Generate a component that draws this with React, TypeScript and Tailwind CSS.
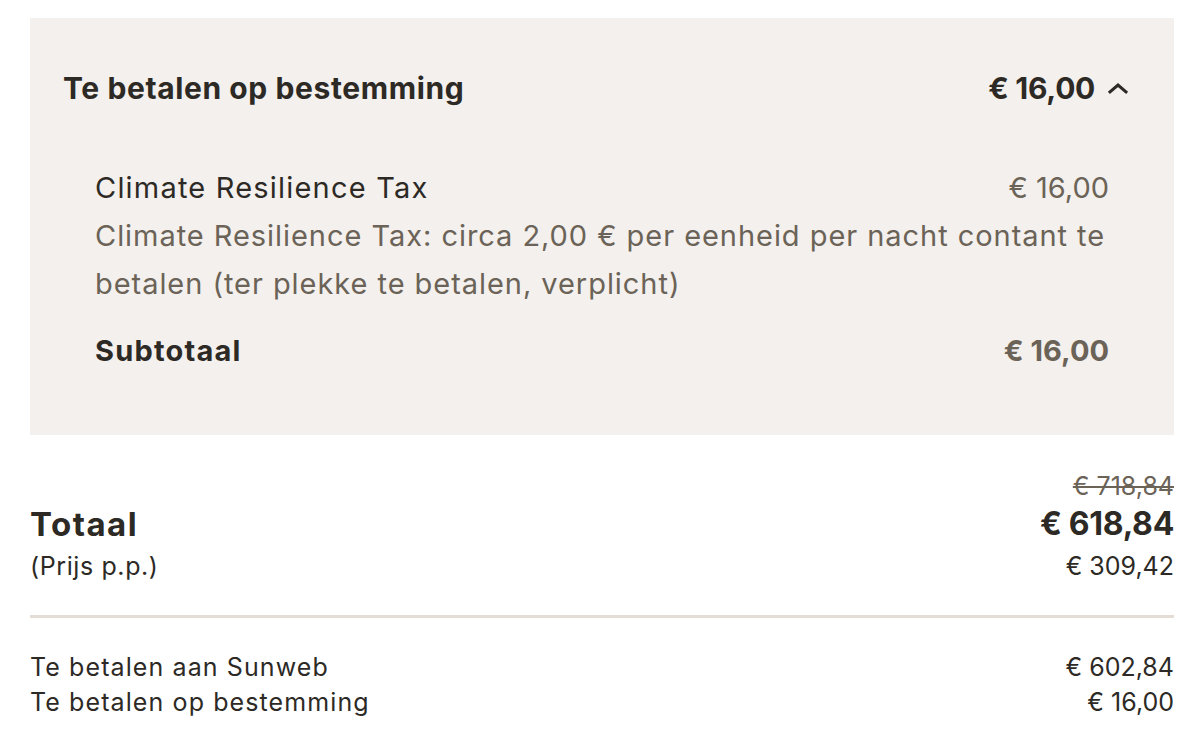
const font = { fontFamily: "Inter, 'Noto Sans', sans-serif" };

function Chevron() {
  return (
    <svg width="22" height="14" viewBox="0 0 22 14" fill="none" stroke="currentColor" strokeWidth="3" strokeLinecap="square">
      <polyline points="3,11 11,4 19,11" />
    </svg>
  );
}

export default function App() {
  return (
    <div className="min-h-screen bg-white pl-[30px] pr-[20px] pt-[18px] text-[#2d2a26]" style={font}>
      {/* Ter plaatse te betalen */}
      <div className="bg-[#f3f0ed] pb-[60px]">
        <div className="flex items-center justify-between pl-[33px] pr-[45px] pt-[52px]">
          <span className="text-[30px] font-bold leading-[36px] tracking-[0.6px]">Te betalen op bestemming</span>
          <div className="flex items-center gap-[12px]">
            <span className="text-[30px] font-bold leading-[36px] tracking-[-0.3px]">€ 16,00</span>
            <Chevron />
          </div>
        </div>

        <div className="mt-[58px] px-[65px]">
          <div className="flex justify-between text-[29px] leading-[48px]">
            <span className="tracking-[1.2px]">Climate Resilience Tax</span>
            <span className="text-[#6b6357]">€ 16,00</span>
          </div>
          <p className="text-[29px] leading-[48px] tracking-[0.95px] text-[#6b6357]">
            Climate Resilience Tax: circa 2,00 € per eenheid per nacht contant te betalen (ter plekke te betalen,
            verplicht)
          </p>
          <div className="mt-[19px] flex justify-between text-[29px] font-bold leading-[48px]">
            <span className="tracking-[1.2px]">Subtotaal</span>
            <span className="text-[#6b6357]">€ 16,00</span>
          </div>
        </div>
      </div>

      {/* Totaal */}
      <div className="pt-[35px]">
        <div className="text-right text-[25px] leading-[32px] text-[#6b6357] line-through">€ 718,84</div>
        <div className="flex items-center justify-between">
          <span className="text-[33px] font-bold leading-[44px] tracking-[1.5px]">Totaal</span>
          <span className="text-[32px] font-bold leading-[44px] tracking-[-0.3px]">€ 618,84</span>
        </div>
        <div className="mt-[4px] flex justify-between text-[25px] leading-[32px]">
          <span className="tracking-[0.6px]">(Prijs p.p.)</span>
          <span>€ 309,42</span>
        </div>
      </div>

      <div className="mt-[33px] h-[3px] bg-[#e4ddd6]" />

      <div className="pt-[32px] text-[25px] leading-[35px]">
        <div className="flex justify-between">
          <span className="tracking-[1.1px]">Te betalen aan Sunweb</span>
          <span>€ 602,84</span>
        </div>
        <div className="flex justify-between">
          <span className="tracking-[1.1px]">Te betalen op bestemming</span>
          <span>€ 16,00</span>
        </div>
      </div>
    </div>
  );
}
